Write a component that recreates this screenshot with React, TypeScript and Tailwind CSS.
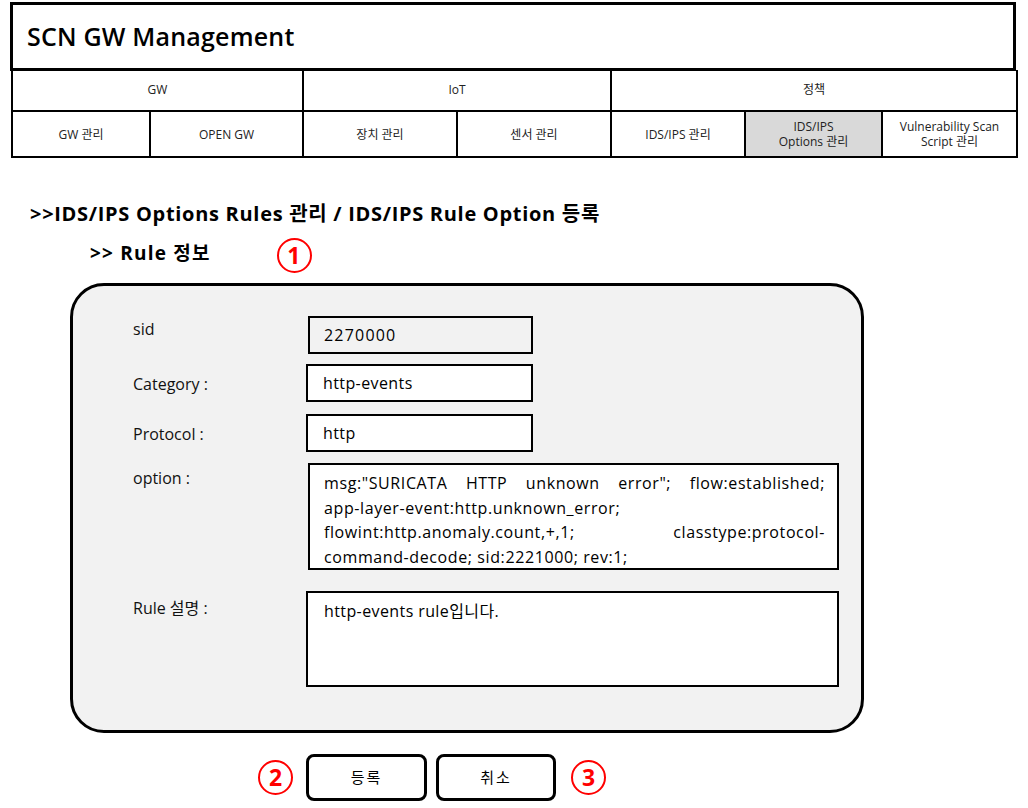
import React from 'react';

const FONT = { fontFamily: '"Open Sans", "Noto Sans CJK KR", sans-serif' };

const Mark = ({ n }: { n: string }) => (
  <div className="w-[35px] h-[35px] rounded-full border-2 border-[#ff0000] flex items-center justify-center text-[#ff0000] text-[23px] font-bold leading-none bg-transparent">
    {n}
  </div>
);

const Cell = ({ children, active = false }: { children: React.ReactNode; active?: boolean }) => (
  <td className={`border-2 border-black text-center text-[12px] leading-[15px] text-[#222] ${active ? 'bg-[#d9d9d9]' : 'bg-white'}`}>
    {children}
  </td>
);

const Row = ({ label, labelPad, children }: { label: string; labelPad: string; children: React.ReactNode }) => (
  <div className="flex items-start">
    <div className={`w-[173px] shrink-0 text-[16px] leading-[20px] text-[#111] ${labelPad}`}>{label}</div>
    {children}
  </div>
);

export default function App() {
  return (
    <div className="w-[1028px] h-[808px] bg-white text-black overflow-hidden" style={FONT}>
      {/* title bar */}
      <div className="ml-[10px] mt-[2px] w-[1006px] h-[69px] border-[3px] border-black flex items-center pl-[14px]">
        <span className="text-[25px] font-semibold tracking-[0.2px]">SCN GW Management</span>
      </div>

      {/* menu */}
      <table className="ml-[11px] w-[1005px] border-collapse table-fixed -mt-[1px]">
        <colgroup>
          <col className="w-[138px]" />
          <col className="w-[153px]" />
          <col className="w-[154px]" />
          <col className="w-[154px]" />
          <col className="w-[134px]" />
          <col className="w-[137px]" />
          <col className="w-[135px]" />
        </colgroup>
        <tbody>
          <tr className="h-[41px]">
            <td colSpan={2} className="border-2 border-t-0 border-black text-center text-[12px] text-[#222]">GW</td>
            <td colSpan={2} className="border-2 border-t-0 border-black text-center text-[12px] text-[#222]">IoT</td>
            <td colSpan={3} className="border-2 border-t-0 border-black text-center text-[12px] text-[#222]">정책</td>
          </tr>
          <tr className="h-[46px]">
            <Cell>GW 관리</Cell>
            <Cell>OPEN GW</Cell>
            <Cell>장치 관리</Cell>
            <Cell>센서 관리</Cell>
            <Cell>IDS/IPS 관리</Cell>
            <Cell active>
              IDS/IPS
              <br />
              Options 관리
            </Cell>
            <Cell>
              Vulnerability Scan
              <br />
              Script 관리
            </Cell>
          </tr>
        </tbody>
      </table>

      {/* headings */}
      <div className="mt-[43px] ml-[30px] text-[20px] leading-[26px] font-bold tracking-[0.7px]">
        &gt;&gt;IDS/IPS Options Rules 관리 / IDS/IPS Rule Option 등록
      </div>
      <div className="relative mt-[13px] ml-[90px] text-[19px] leading-[26px] font-bold tracking-[1.2px]">
        &gt;&gt; Rule 정보
        <div className="absolute left-[187px] top-[-2px]">
          <Mark n="1" />
        </div>
      </div>

      {/* form panel */}
      <div className="mt-[17px] ml-[70px] w-[794px] h-[450px] border-[3px] border-black rounded-[34px] bg-[#f2f2f2] pt-[30px] pl-[60px] flex flex-col">
        <Row label="sid" labelPad="pt-[3px]">
          <div className="ml-[2px] w-[225px] h-[38px] border-2 border-black bg-[#f2f2f2] flex items-center pl-[14px] text-[16px] tracking-[1.2px]">
            2270000
          </div>
        </Row>
        <div className="h-[10px]" />
        <Row label="Category :" labelPad="pt-[10px]">
          <div className="w-[227px] h-[38px] border-2 border-black bg-white flex items-center pl-[15px] text-[16px] tracking-[0.4px]">
            http-events
          </div>
        </Row>
        <div className="h-[12px]" />
        <Row label="Protocol :" labelPad="pt-[10px]">
          <div className="w-[227px] h-[38px] border-2 border-black bg-white flex items-center pl-[15px] text-[16px] tracking-[0.4px]">
            http
          </div>
        </Row>
        <div className="h-[11px]" />
        <Row label="option :" labelPad="pt-[5px]">
          <div className="ml-[2px] w-[531px] h-[107px] border-2 border-black bg-white pl-[14px] pr-[12px] pt-[6px] text-[16px] leading-[24.7px] tracking-[0.6px]">
            <div className="text-justify [text-align-last:justify]">msg:"SURICATA HTTP unknown error"; flow:established;</div>
            <div>app-layer-event:http.unknown_error;</div>
            <div className="text-justify [text-align-last:justify]">flowint:http.anomaly.count,+,1; classtype:protocol-</div>
            <div>command-decode; sid:2221000; rev:1;</div>
          </div>
        </Row>
        <div className="h-[21px]" />
        <Row label="Rule 설명 :" labelPad="pt-[7px]">
          <div className="w-[533px] h-[96px] border-2 border-black bg-white pl-[16px] pt-[6px] text-[16px] leading-[24px] tracking-[0.4px]">
            http-events rule입니다.
          </div>
        </Row>
      </div>

      {/* actions */}
      <div className="mt-[21px] ml-[258px] flex items-center">
        <Mark n="2" />
        <button className="ml-[13px] w-[121px] h-[47px] border-[3px] border-black rounded-[8px] bg-white text-[15px] tracking-[2px]">
          등록
        </button>
        <button className="ml-[9px] w-[120px] h-[47px] border-[3px] border-black rounded-[8px] bg-white text-[15px] tracking-[2px]">
          취소
        </button>
        <div className="ml-[15px]">
          <Mark n="3" />
        </div>
      </div>
    </div>
  );
}
